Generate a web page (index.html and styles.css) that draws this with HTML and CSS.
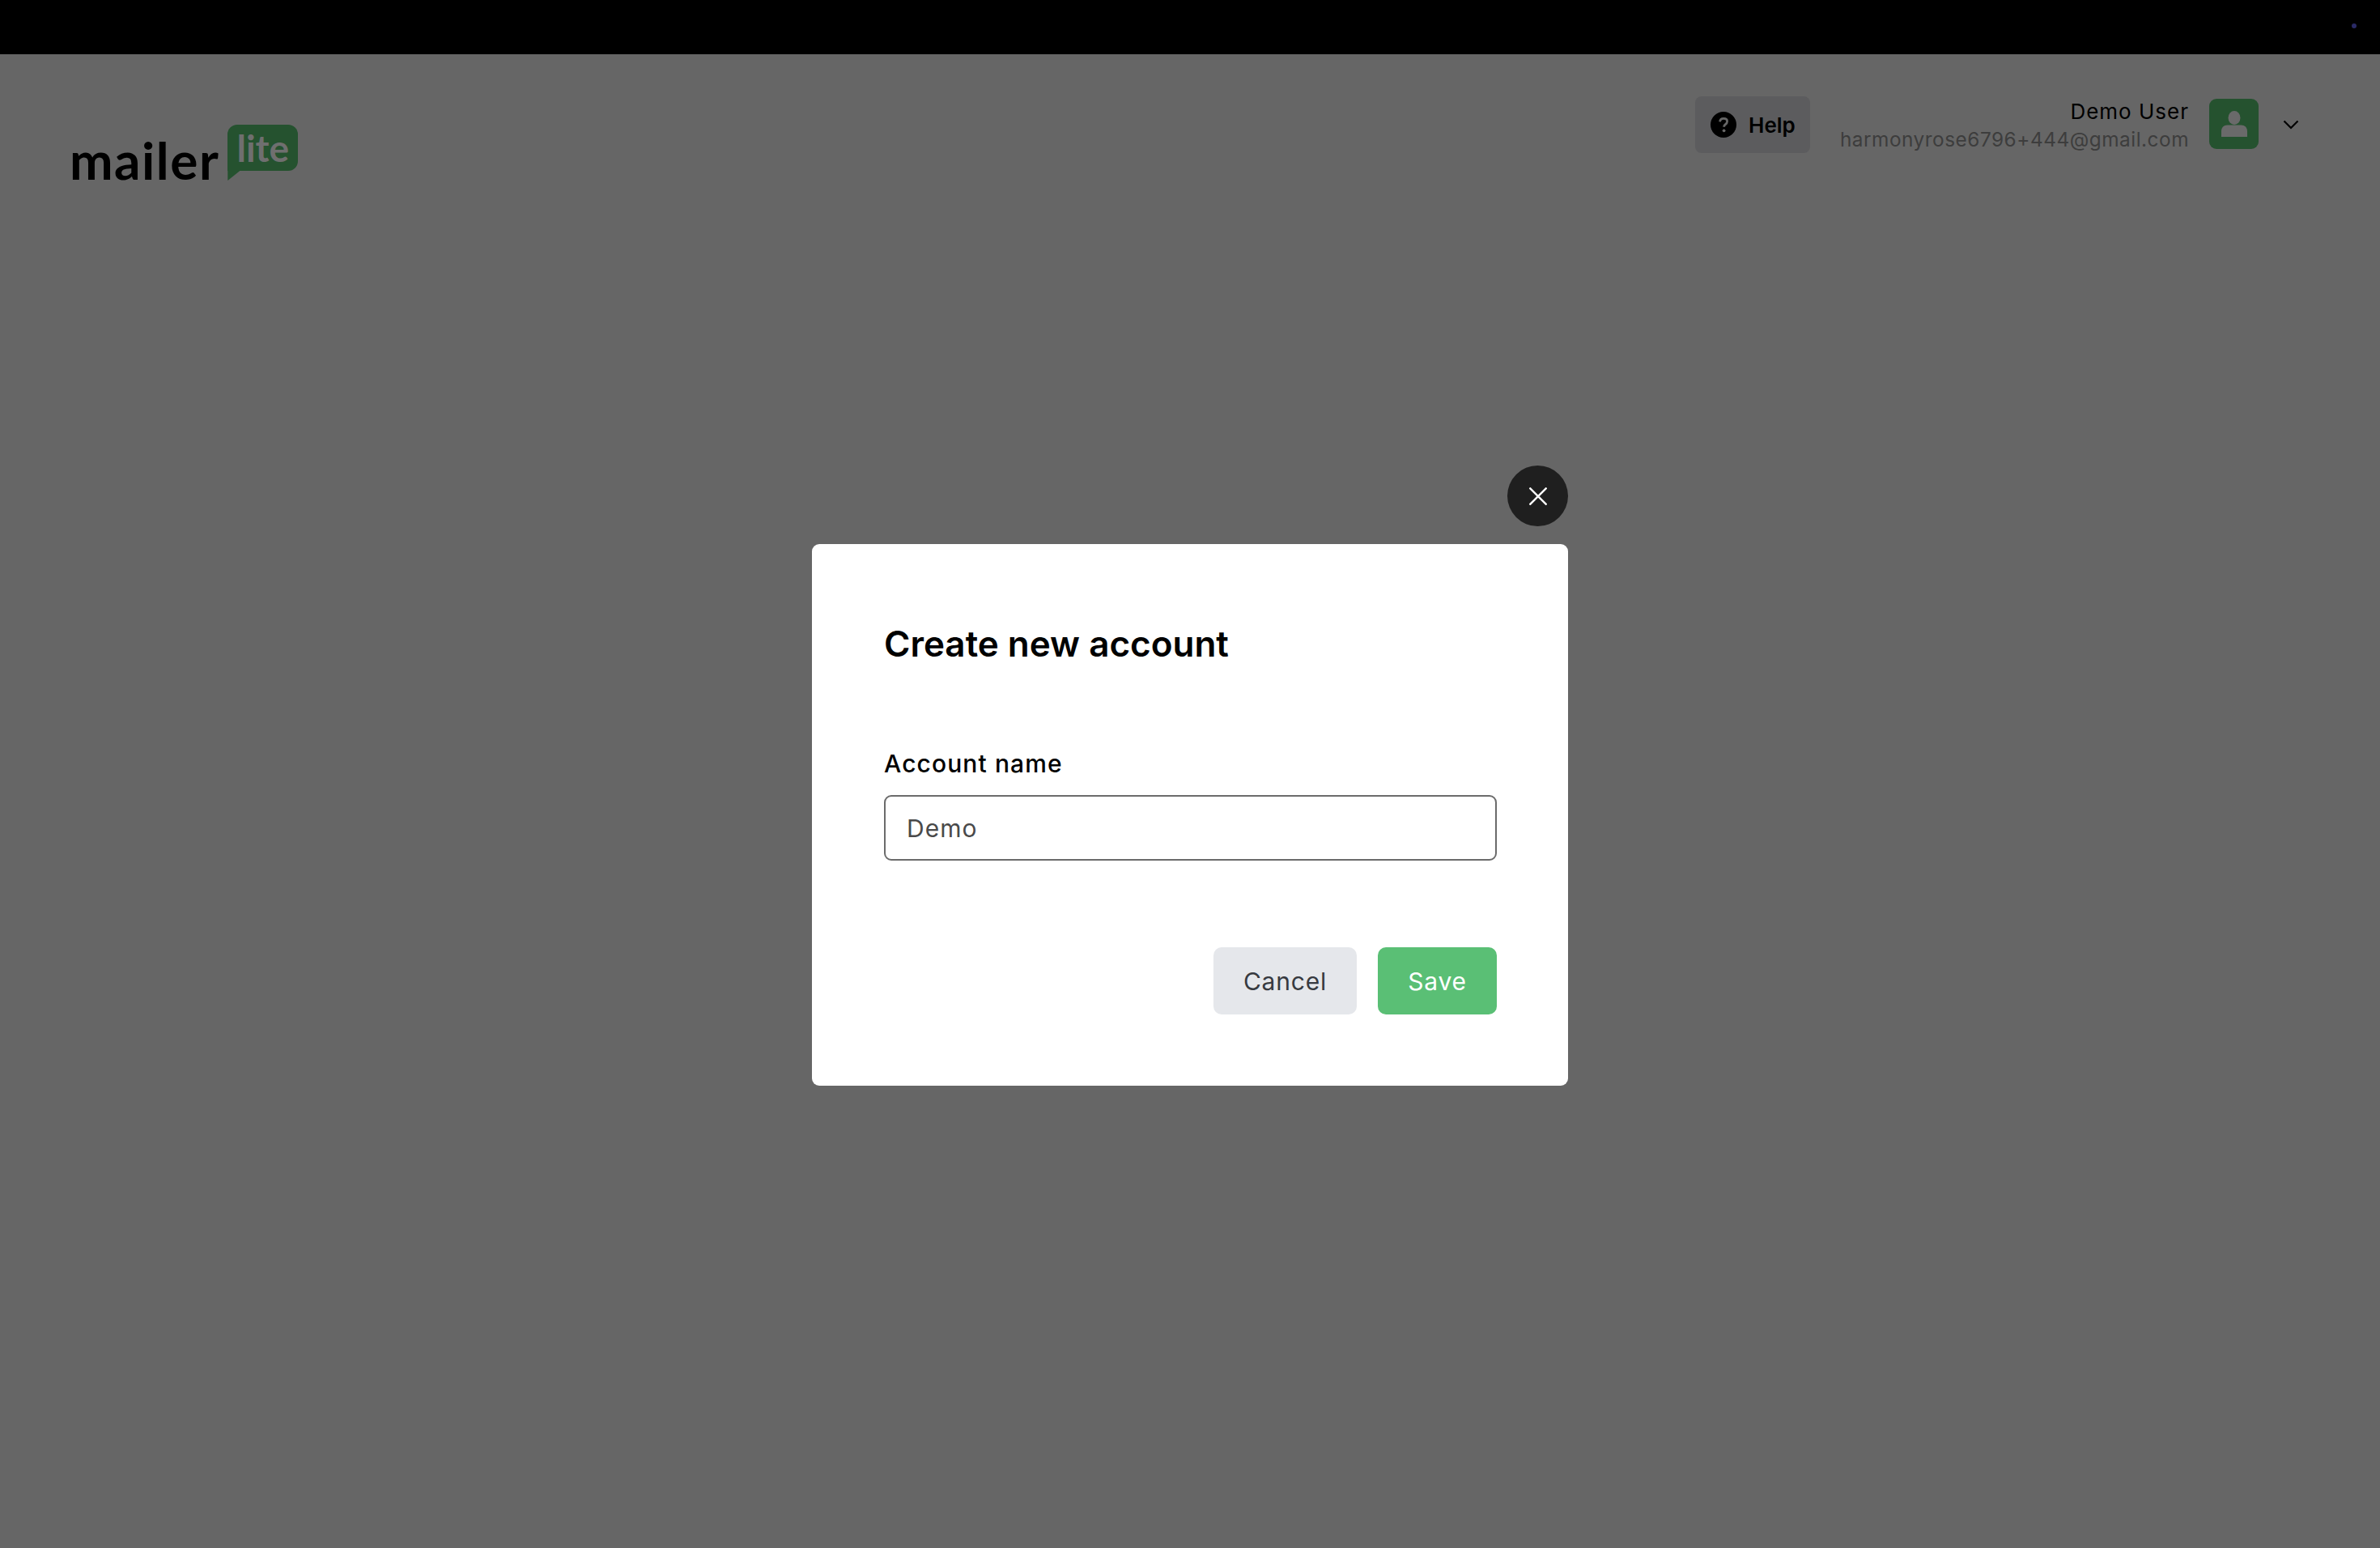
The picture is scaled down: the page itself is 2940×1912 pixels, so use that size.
FILE: index.html
```html
<!DOCTYPE html>
<html lang="en">
<head>
<meta charset="utf-8">
<title>Create new account</title>
<link rel="stylesheet" href="styles.css">
</head>
<body>
<div class="topbar"><span class="topbar-dot"></span></div>
<header class="header">
  <div class="logo">
    <span class="logo-word">mailer</span>
    <span class="logo-bubble">lite</span>
  </div>
  <div class="header-right">
    <button class="help" type="button">
      <svg class="help-icon" viewBox="0 0 32 32" aria-hidden="true"><circle cx="16" cy="16" r="16" fill="#000"/><path d="M11.6 12.4c.2-2.6 2.1-4 4.6-4 2.600 0 4.400 1.500 4.400 3.700 0 1.700-.9 2.700-2.300 3.600-1.200.8-1.600 1.300-1.600 2.500v.5" fill="none" stroke="#666" stroke-width="2.800"/><circle cx="16.600" cy="23.300" r="1.900" fill="#666"/></svg>
      <span>Help</span>
    </button>
    <div class="user">
      <div class="user-name">Demo User</div>
      <div class="user-mail">harmonyrose6796+444@gmail.com</div>
    </div>
    <div class="avatar">
      <svg viewBox="0 0 32 32" width="32" height="32" aria-hidden="true"><ellipse cx="16" cy="8.500" rx="7.500" ry="8.500" fill="#6a6a6a"/><path d="M0 32v-7c0-4.500 3-7.500 7.500-7.500h17c4.500 0 7.500 3 7.500 7.500v7z" fill="#6a6a6a"/></svg>
    </div>
    <svg class="chevron" viewBox="0 0 20 12" aria-hidden="true"><path d="M1.500 1.500 10 10l8.500-8.500" fill="none" stroke="#000" stroke-width="2.200"/></svg>
  </div>
</header>

<div class="overlay-layer">
  <section class="modal">
    <button class="close" type="button" aria-label="Close">
      <svg viewBox="0 0 22 22" width="22" height="22" aria-hidden="true"><path d="M.5.5l21 21M21.500.5l-21 21" stroke="#fff" stroke-width="2.400" fill="none"/></svg>
    </button>
    <h1 class="modal-title">Create new account</h1>
    <label class="field-label" for="acct">Account name</label>
    <input class="field-input" id="acct" type="text" value="Demo">
    <div class="actions">
      <button class="btn btn-cancel" type="button">Cancel</button>
      <button class="btn btn-save" type="button">Save</button>
    </div>
  </section>
</div>
</body>
</html>
```
FILE: styles.css
```css
* { box-sizing: border-box; }
html, body { margin: 0; padding: 0; }
body {
  width: 2940px;
  height: 1912px;
  background: #666;
  font-family: Inter, "Liberation Sans", sans-serif;
  overflow: hidden;
  position: relative;
}
.topbar {
  height: 67px;
  background: #000;
  display: flex;
  justify-content: flex-end;
  align-items: flex-start;
  padding: 29px 29px 0 0;
}
.topbar-dot {
  width: 6px;
  height: 6px;
  border-radius: 50%;
  background: #2a2a66;
}
.header {
  display: flex;
  justify-content: space-between;
  align-items: flex-start;
  padding: 52px 100px 0 86px;
}
.logo {
  display: flex;
  align-items: flex-start;
  gap: 10px;
  padding-top: 35px;
}
.logo-word {
  font-family: Lato, sans-serif;
  font-weight: 700;
  font-size: 64px;
  line-height: 64px;
  letter-spacing: 1.500px;
  color: #000;
  margin-top: 12px;
}
.logo-bubble {
  position: relative;
  width: 87px;
  height: 57px;
  background: #25522f;
  border-radius: 12px 12px 12px 0;
  color: #6f6f6f;
  font-family: Lato, sans-serif;
  font-weight: 700;
  font-size: 46px;
  line-height: 57px;
  text-align: center;
}
.logo-bubble::after {
  content: "";
  position: absolute;
  left: 0;
  top: 57px;
  width: 15px;
  height: 12px;
  background: #25522f;
  clip-path: polygon(0 0, 100% 0, 0 100%);
}
.header-right {
  display: flex;
  align-items: flex-start;
}
.help {
  display: flex;
  align-items: center;
  gap: 15px;
  width: 142px;
  height: 70px;
  padding: 0 0 0 19px;
  border: 0;
  border-radius: 8px;
  background: #5c5c5e;
  color: #000;
  font-family: inherit;
  font-weight: 600;
  font-size: 26px;
}
.help-icon { width: 32px; height: 32px; flex: none; }
.user {
  width: 468px;
  text-align: right;
  margin-top: 1px;
}
.user-name {
  color: #000;
  font-size: 26px;
  line-height: 36px;
  letter-spacing: 1px;
}
.user-mail {
  color: #3d3d3d;
  font-size: 24.400px;
  line-height: 32px;
  letter-spacing: 0.500px;
}
.avatar {
  width: 61px;
  height: 62px;
  margin: 3px 0 0 25px;
  border-radius: 9px;
  background: #25522f;
  display: flex;
  justify-content: center;
  align-items: center;
}
.chevron {
  width: 20px;
  height: 12px;
  margin: 29px 0 0 30px;
}
.overlay-layer {
  position: absolute;
  inset: 0;
  display: flex;
  justify-content: center;
  align-items: flex-start;
  padding-top: 672px;
}
.modal {
  position: relative;
  width: 934px;
  height: 669px;
  background: #fff;
  border-radius: 9px;
  padding: 92px 88px 0 89px;
  display: flex;
  flex-direction: column;
}
.close {
  position: absolute;
  right: 0;
  top: -97px;
  width: 75px;
  height: 75px;
  border: 0;
  border-radius: 50%;
  background: #1f1f1f;
  display: flex;
  align-items: center;
  justify-content: center;
  padding: 0;
}
.modal-title {
  margin: 0;
  font-size: 44px;
  line-height: 62px;
  font-weight: 600;
  color: #000;
}
.field-label {
  margin-top: 97px;
  font-size: 30px;
  line-height: 40px;
  font-weight: 500;
  letter-spacing: 1.100px;
  color: #000;
}
.field-input {
  margin-top: 19px;
  width: 100%;
  height: 81px;
  border: 2px solid #6b6b6b;
  border-radius: 9px;
  padding: 0 26px;
  font-family: inherit;
  font-size: 30px;
  letter-spacing: 1px;
  color: #4a4a4a;
  outline: none;
}
.actions {
  display: flex;
  justify-content: flex-end;
  gap: 26px;
  margin-top: 107px;
}
.btn {
  height: 83px;
  border: 0;
  border-radius: 10px;
  font-family: inherit;
  font-size: 30px;
  letter-spacing: 0.800px;
  padding: 0;
}
.btn-cancel { width: 177px; background: #e5e7eb; color: #373a40; }
.btn-save { width: 147px; background: #5abf75; color: #fff; }
```
